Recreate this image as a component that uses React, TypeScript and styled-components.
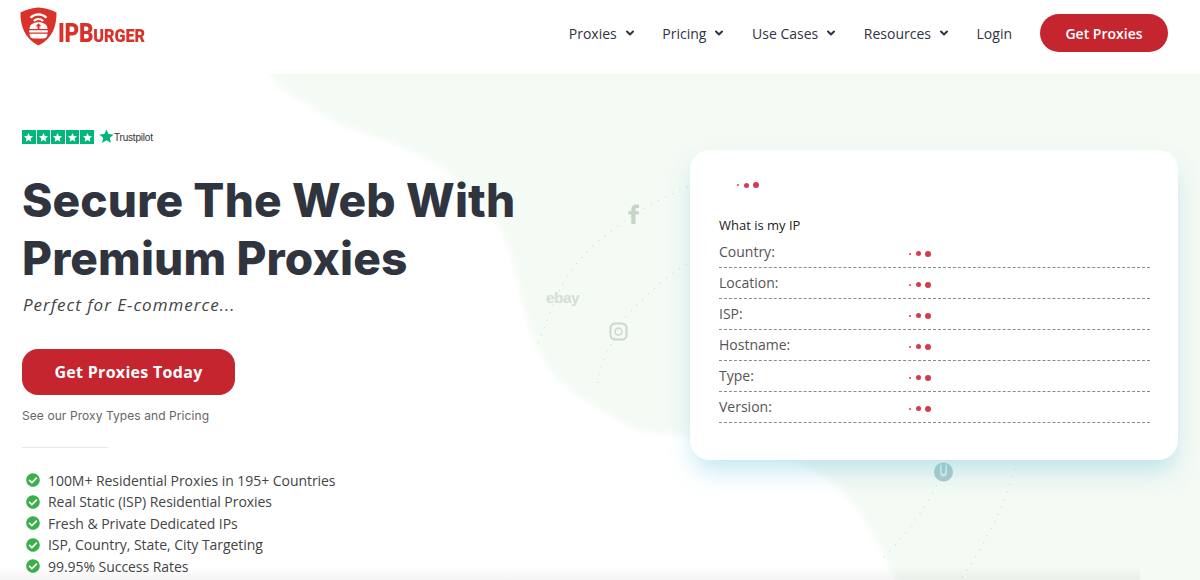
import React from 'react';
import styled, {createGlobalStyle} from "styled-components";
import {ChevronDown} from "lucide-react";
import {FaCheckCircle} from "react-icons/fa";

const GlobalStyle = createGlobalStyle`
  html, body {
    margin: 0;
    padding: 0;
    background: #fff;
    font-family: "Open Sans", "Liberation Sans", sans-serif;
  }
  * { box-sizing: border-box; }
`

const STAR = 'M12 2l2.9 6.6 7.1.7-5.4 4.7 1.6 7-6.2-3.7L5.800 21l1.600-7L2 9.300l7.100-.7z';

const navItems = [
    {label: 'Proxies', arrow: true},
    {label: 'Pricing', arrow: true},
    {label: 'Use Cases', arrow: true},
    {label: 'Resources', arrow: true},
    {label: 'Login', arrow: false},
];

const features = [
    '100M+ Residential Proxies in 195+ Countries',
    'Real Static (ISP) Residential Proxies',
    'Fresh & Private Dedicated IPs',
    'ISP, Country, State, City Targeting',
    '99.95% Success Rates',
];

const ipRows = ['Country:', 'Location:', 'ISP:', 'Hostname:', 'Type:', 'Version:'];

const Shield = () => (
    <svg width="37" height="39" viewBox="0 0 37 39">
        <path d="M18.500 0.500C24 1 31 2.500 36.500 5.500C36.800 19 32 32 18.500 38.500C5 32 0.200 19 0.500 5.500C6 2.500 13 1 18.500 0.500Z" fill="#d8322b"/>
        <path d="M10.500 10.800C15 6.300 22 6.300 26.500 10.800" fill="none" stroke="#fff" strokeWidth="2.200"/>
        <path d="M13.800 14C16.500 11.500 20.500 11.500 23.200 14" fill="none" stroke="#fff" strokeWidth="2.200"/>
        <path d="M9.500 22C9.500 17.500 13.500 15.300 18.500 15.300C23.500 15.300 27.500 17.500 27.500 22Z" fill="#fff"/>
        <path d="M18.500 16.300l2.800 3h-1.800v2.700h-2v-2.700h-1.800z" fill="#d8322b"/>
        <rect x="9" y="23.200" width="19" height="2.300" rx="1" fill="#fff"/>
        <path d="M9.500 26.700H27.500C27.500 30 25.500 31.500 23 31.500H14C11.500 31.500 9.500 30 9.500 26.700Z" fill="#fff"/>
    </svg>
);

const Background = () => (
    <BackgroundSvg viewBox="0 74 1200 506">
        <defs>
            <filter id="soft" x="-5%" y="-5%" width="110%" height="110%">
                <feGaussianBlur stdDeviation="3"/>
            </filter>
        </defs>
        <path
            d="M262 60C272 78 280 87 290 93C310 106 325 116 340 123C365 134 385 139 407 148C430 158 445 168 457 180C480 200 492 212 500 227C518 262 520 300 533 337C543 360 552 375 567 387C578 396 588 402 600 408C612 415 622 423 633 428C650 434 670 434 690 436C730 442 770 450 800 463C825 475 840 487 850 500C870 525 885 550 900 590L1215 590L1215 60Z"
            fill="#f4faf4"
            filter="url(#soft)"
        />
        <rect x="255" y="40" width="960" height="34" fill="#fff"/>
        <g fill="none" stroke="#cfdcd0" strokeWidth="1.200" strokeDasharray="1 7">
            <path d="M538 343C548 320 555 298 563 283C578 258 595 243 610 232C640 208 665 197 690 186"/>
            <path d="M598 383C600 368 604 357 610 347C615 335 620 325 627 315C640 302 650 292 660 283C670 275 680 268 690 262"/>
            <path d="M884 557C905 535 925 510 937 485"/>
            <path d="M962 577C985 545 1005 505 1017 462"/>
        </g>
        <path d="M635.500 222V214.500H638.800V211.300H635.500V209.500C635.500 208.400 636.200 208 637.300 208H639V204.700C638.200 204.600 637.200 204.500 636.300 204.500C633.300 204.500 631.300 206.200 631.300 209.300V211.300H628.300V214.500H631.300V224H635.500Z" fill="#c5d5c6"/>
        <text x="546" y="303" fontFamily="Liberation Sans, sans-serif" fontSize="15.500" fontWeight="700" letterSpacing="-0.600" fill="#d3dfd3">ebay</text>
        <rect x="610.500" y="323.500" width="16" height="16" rx="4.500" fill="none" stroke="#c9d8ca" strokeWidth="2"/>
        <circle cx="618.500" cy="331.500" r="3.500" fill="none" stroke="#c9d8ca" strokeWidth="1.500"/>
        <circle cx="943.500" cy="472" r="9.500" fill="#a9cac8"/>
        <path d="M940 464.500V472C940 475 941.300 476.500 943.500 476.500C945.700 476.500 947 475 947 472V464.500H945.300V471.500C945.300 473 944.800 474 943.500 474C942.200 474 941.700 473 941.700 471.500V464.500Z" fill="#dcecea"/>
    </BackgroundSvg>
);

const Dots = () => (
    <DotsRow>
        <Dot $size={2}/>
        <Dot $size={5}/>
        <Dot $size={6}/>
    </DotsRow>
);

export default function App() {
    return (
        <Page>
            <GlobalStyle/>
            <Header>
                <Logo>
                    <Shield/>
                    <LogoText>IPB<small>URGER</small></LogoText>
                </Logo>
                <Nav>
                    {navItems.map(item => (
                        <NavLink key={item.label}>
                            {item.label}
                            {item.arrow && <ChevronDown size={12} strokeWidth={4}/>}
                        </NavLink>
                    ))}
                    <HeaderButton>Get Proxies</HeaderButton>
                </Nav>
            </Header>
            <Hero>
                <Background/>
                <LeftColumn>
                    <Trustpilot>
                        <Stars>
                            {[0, 1, 2, 3, 4].map(i => (
                                <StarBox key={i}>
                                    <svg width="11" height="11" viewBox="0 0 24 24"><path d={STAR} fill="#fff"/></svg>
                                </StarBox>
                            ))}
                        </Stars>
                        <TrustpilotStar width="17" height="17" viewBox="0 0 24 24"><path d={STAR} fill="#00b67a"/></TrustpilotStar>
                        <TrustpilotName>Trustpilot</TrustpilotName>
                    </Trustpilot>
                    <Title>Secure The Web With<br/>Premium Proxies</Title>
                    <Subtitle>Perfect for E-commerce...</Subtitle>
                    <HeroButton>Get Proxies Today</HeroButton>
                    <Note>See our Proxy Types and Pricing</Note>
                    <Divider/>
                    <FeatureList>
                        {features.map(text => (
                            <Feature key={text}>
                                <FaCheckCircle size={14} color="#3bb04a"/>
                                {text}
                            </Feature>
                        ))}
                    </FeatureList>
                </LeftColumn>
                <Card>
                    <CardLoader><Dots/></CardLoader>
                    <CardTitle>What is my IP</CardTitle>
                    {ipRows.map(label => (
                        <IpRow key={label}>
                            <span>{label}</span>
                            <Dots/>
                        </IpRow>
                    ))}
                </Card>
            </Hero>
            <BottomFade/>
        </Page>
    );
}

const Page = styled.div`
  position: relative;
  width: 1200px;
  height: 580px;
  overflow: hidden;
  background: #fff;
`

const Header = styled.header`
  display: flex;
  align-items: flex-start;
  justify-content: space-between;
  height: 74px;
  padding: 7px 32px 0 20px;
`

const Logo = styled.div`
  display: flex;
  align-items: flex-start;
  gap: 1px;
`

const LogoText = styled.span`
  margin-top: 14px;
  font-family: Roboto, "Liberation Sans", sans-serif;
  font-weight: 900;
  font-size: 25px;
  line-height: 26px;
  letter-spacing: -0.300px;
  color: #d8322b;
  transform: scaleX(0.9);
  transform-origin: left center;

  small {
    font-size: 18px;
    letter-spacing: 0;
  }
`

const Nav = styled.nav`
  display: flex;
  align-items: center;
  height: 38px;
  margin-top: 7px;
`

const NavLink = styled.a`
  display: flex;
  align-items: center;
  gap: 7px;
  margin-right: 26.600px;
  font-size: 14px;
  font-weight: 500;
  color: #2f3440;
  white-space: nowrap;

  &:last-of-type { margin-right: 28px; }

  svg { margin-top: -1px; }
`

const HeaderButton = styled.button`
  width: 128px;
  height: 38px;
  border: none;
  border-radius: 19px;
  background: #c5252f;
  color: #fff;
  font-family: inherit;
  font-size: 14px;
  font-weight: 600;
`

const Hero = styled.main`
  position: relative;
  display: flex;
  align-items: flex-start;
  justify-content: space-between;
  height: 506px;
  padding: 56px 22px 0 22px;
`

const BackgroundSvg = styled.svg`
  position: absolute;
  top: 0;
  left: 0;
  width: 1200px;
  height: 506px;
`

const LeftColumn = styled.div`
  position: relative;
  display: flex;
  flex-direction: column;
  align-items: flex-start;
`

const Trustpilot = styled.div`
  display: flex;
  align-items: center;
  gap: 5px;
  height: 14px;
`

const Stars = styled.div`
  display: flex;
  gap: 1px;
`

const StarBox = styled.span`
  display: flex;
  align-items: center;
  justify-content: center;
  width: 13.600px;
  height: 14px;
  background: #00b67a;
`

const TrustpilotStar = styled.svg`
  margin: -2px 0 0 -1px;
`

const TrustpilotName = styled.span`
  margin-left: -6px;
  font-family: "Liberation Sans", sans-serif;
  font-size: 10px;
  letter-spacing: -0.200px;
  color: #333;
`

const Title = styled.h1`
  margin: 27px 0 0;
  font-family: Inter, "Liberation Sans", sans-serif;
  font-size: 46px;
  font-weight: 800;
  line-height: 58px;
  letter-spacing: 0.150px;
  color: #30343e;
  white-space: nowrap;
`

const Subtitle = styled.p`
  margin: 6px 0 0 1px;
  font-size: 17px;
  font-style: italic;
  line-height: 24px;
  letter-spacing: 1px;
  color: #444;
`

const HeroButton = styled.button`
  width: 213px;
  height: 46px;
  margin-top: 32px;
  border: none;
  border-radius: 16px;
  background: #c5252f;
  color: #fff;
  font-family: inherit;
  font-size: 16px;
  font-weight: 700;
  letter-spacing: 0.300px;
`

const Note = styled.p`
  margin: 13px 0 0;
  font-family: Inter, "Liberation Sans", sans-serif;
  font-size: 12px;
  line-height: 16px;
  letter-spacing: 0.080px;
  color: #666;
`

const Divider = styled.div`
  width: 86px;
  height: 1px;
  margin-top: 23px;
  background: #e8e8e8;
`

const FeatureList = styled.ul`
  display: flex;
  flex-direction: column;
  gap: 1.500px;
  margin: 22px 0 0;
  padding: 0 0 0 4px;
  list-style: none;
`

const Feature = styled.li`
  display: flex;
  align-items: center;
  gap: 8px;
  height: 20px;
  font-size: 14px;
  letter-spacing: -0.050px;
  color: #444;
  white-space: nowrap;
`

const Card = styled.section`
  position: relative;
  width: 488px;
  height: 310px;
  margin: 20px 0 0 0;
  padding: 0 28px 0 29px;
  border-radius: 20px;
  background: #fff;
  box-shadow: 0 14px 24px -4px rgba(110, 195, 225, 0.42);
`

const CardLoader = styled.div`
  display: flex;
  height: 38px;
  padding: 32px 0 0 18px;
`

const CardTitle = styled.h2`
  margin: 27px 0 2px;
  font-size: 13px;
  font-weight: 400;
  line-height: 20px;
  color: #222;
`

const IpRow = styled.div`
  display: grid;
  grid-template-columns: 190px 1fr;
  align-items: center;
  height: 31px;
  border-bottom: 1px dashed #8c8c8c;
  font-size: 14px;
  color: #555;
  padding-bottom: 1px;

  & > div { margin-top: 4px; }
`

const DotsRow = styled.div`
  display: flex;
  align-items: center;
  gap: 4.500px;
  height: 6px;
`

const Dot = styled.i<{ $size: number }>`
  display: block;
  width: ${props => props.$size}px;
  height: ${props => props.$size}px;
  border-radius: 50%;
  background: #d43a50;
`

const BottomFade = styled.div`
  position: absolute;
  left: 0;
  bottom: 0;
  width: 1140px;
  height: 14px;
  background: linear-gradient(to bottom, rgba(0, 0, 0, 0), rgba(0, 0, 0, 0.045));
`
